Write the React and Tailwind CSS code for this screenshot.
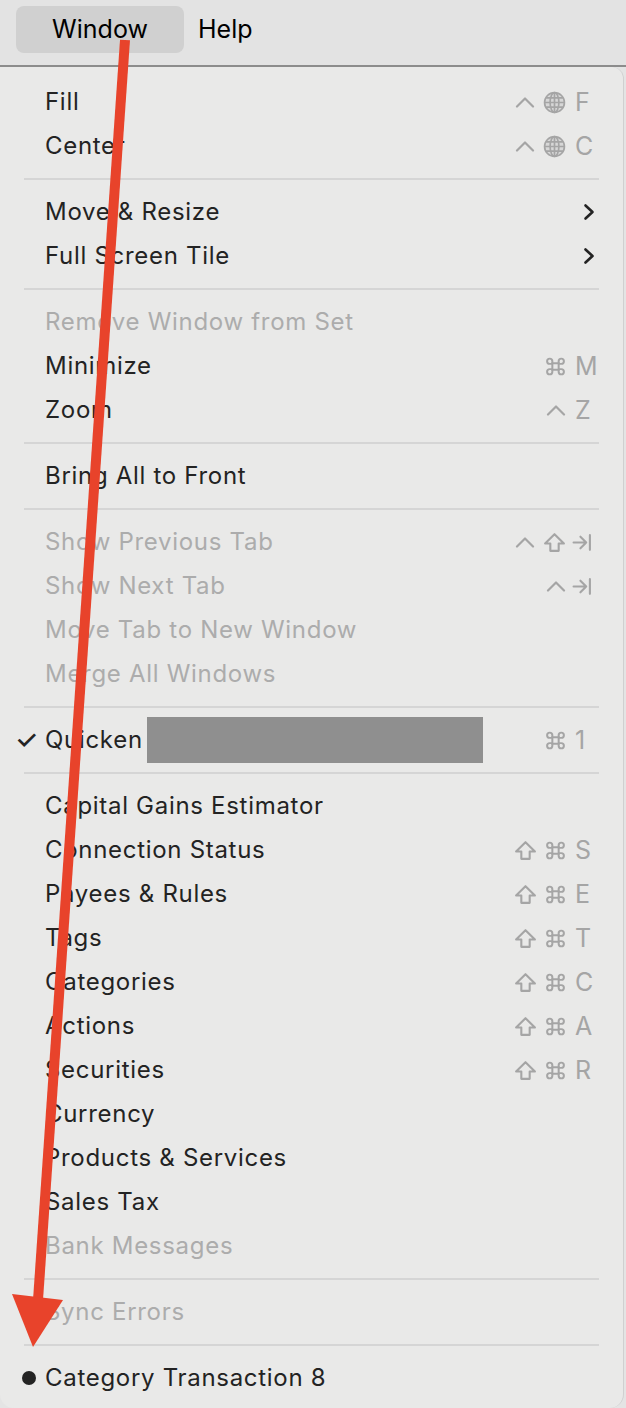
import React from "react";

const GRAY = "#a5a5a5";

function Ctrl() {
  return (
    <svg width="20" height="12" viewBox="0 0 20 12" fill="none" stroke={GRAY} strokeWidth="2.2" strokeLinecap="round" strokeLinejoin="round">
      <path d="M2 10.5 L10 2.5 L18 10.5" />
    </svg>
  );
}

function Globe() {
  return (
    <svg width="23" height="23" viewBox="0 0 22 22" fill="none" stroke={GRAY} strokeWidth="1.6">
      <circle cx="11" cy="11" r="9.5" fill={GRAY} fillOpacity="0.25" />
      <ellipse cx="11" cy="11" rx="4.2" ry="9.5" />
      <path d="M11 1.5 V20.5 M1.5 11 H20.5 M3 6.5 H19 M3 15.5 H19" />
    </svg>
  );
}

function Cmd() {
  return (
    <svg width="21" height="21" viewBox="0 0 20 20" fill="none" stroke={GRAY} strokeWidth="1.9">
      <path d="M7 7 H13 V13 H7 Z" />
      <path d="M7 7 V5 A2.5 2.5 0 1 0 4.5 7.5 H7" />
      <path d="M13 7 V5 A2.5 2.5 0 1 1 15.5 7.5 H13" />
      <path d="M7 13 V15 A2.5 2.5 0 1 1 4.5 12.5 H7" />
      <path d="M13 13 V15 A2.5 2.5 0 1 0 15.5 12.5 H13" />
    </svg>
  );
}

function Shift() {
  return (
    <svg width="23" height="21" viewBox="0 0 22 20" fill="none" stroke={GRAY} strokeWidth="2" strokeLinejoin="round">
      <path d="M11 2 L20 11 H15 V18 H7 V11 H2 Z" />
    </svg>
  );
}

function Tab() {
  return (
    <svg width="20" height="19" viewBox="0 0 19 18" fill="none" stroke={GRAY} strokeWidth="2" strokeLinecap="round" strokeLinejoin="round">
      <path d="M1.5 9 H13.5 M8 3.5 L13.5 9 L8 14.5 M17 2 V16" />
    </svg>
  );
}

function Chevron() {
  return (
    <svg width="12" height="18" viewBox="0 0 12 18" fill="none" stroke="#232323" strokeWidth="2.6" strokeLinecap="round" strokeLinejoin="round">
      <path d="M2.5 2.5 L9.5 9 L2.5 15.5" />
    </svg>
  );
}

const MOD = { ctrl: Ctrl, globe: Globe, cmd: Cmd, shift: Shift, tab: Tab };

const menu = [
  { label: "Fill", mods: ["ctrl", "globe"], key: "F" },
  { label: "Center", mods: ["ctrl", "globe"], key: "C" },
  "sep",
  { label: "Move & Resize", sub: true },
  { label: "Full Screen Tile", sub: true },
  "sep",
  { label: "Remove Window from Set", disabled: true },
  { label: "Minimize", mods: ["cmd"], key: "M" },
  { label: "Zoom", mods: ["ctrl"], key: "Z" },
  "sep",
  { label: "Bring All to Front" },
  "sep",
  { label: "Show Previous Tab", disabled: true, mods: ["ctrl", "shift"], key: "tab" },
  { label: "Show Next Tab", disabled: true, mods: ["ctrl"], key: "tab" },
  { label: "Move Tab to New Window", disabled: true },
  { label: "Merge All Windows", disabled: true },
  "sep",
  { label: "Quicken", check: true, redacted: true, mods: ["cmd"], key: "1" },
  "sep",
  { label: "Capital Gains Estimator" },
  { label: "Connection Status", mods: ["shift", "cmd"], key: "S" },
  { label: "Payees & Rules", mods: ["shift", "cmd"], key: "E" },
  { label: "Tags", mods: ["shift", "cmd"], key: "T" },
  { label: "Categories", mods: ["shift", "cmd"], key: "C" },
  { label: "Actions", mods: ["shift", "cmd"], key: "A" },
  { label: "Securities", mods: ["shift", "cmd"], key: "R" },
  { label: "Currency" },
  { label: "Products & Services" },
  { label: "Sales Tax" },
  { label: "Bank Messages", disabled: true },
  "sep",
  { label: "Sync Errors", disabled: true },
  "sep",
  { label: "Category Transaction 8", bullet: true },
];

function Row({ item }) {
  return (
    <div className="h-[44px] flex items-center pr-[28px]">
      {/* state column */}
      <div className="w-[45px] h-full flex items-center pl-[15px]">
        {item.check && <span className="text-[26px] font-medium leading-none text-[#232323]">✓</span>}
        {item.bullet && <span className="ml-[7px] w-[14px] h-[14px] rounded-full bg-[#232323]" />}
      </div>
      <span className={`text-[24px] tracking-[0.7px] leading-none whitespace-nowrap ${item.disabled ? "text-[#acacac]" : "text-[#232323]"}`}>
        {item.label}
      </span>
      {item.redacted && <div className="ml-[4px] w-[336px] h-[46px] bg-[#8f8f8f]" />}
      <div className="flex-1" />
      {item.sub && <Chevron />}
      {item.key && (
        <div className="flex items-center">
          <div className="flex items-center gap-[8px]">
            {item.mods.map((m, i) => {
              const Icon = MOD[m];
              return <Icon key={i} />;
            })}
          </div>
          <div className="w-[20px] ml-[9px] flex items-center">
            {item.key === "tab" ? (
              <span className="-ml-[3px] flex">
                <Tab />
              </span>
            ) : (
              <span className="text-[25px] leading-none" style={{ color: GRAY }}>
                {item.key}
              </span>
            )}
          </div>
        </div>
      )}
    </div>
  );
}

export default function App() {
  return (
    <div
      className="relative w-[626px] h-[1408px] overflow-hidden bg-[#e4e4e4]"
      style={{ fontFamily: "Inter, 'Liberation Sans', sans-serif" }}
    >
      {/* menu bar */}
      <div className="h-[67px] border-b-2 border-[#8c8c8c] bg-[#e3e3e3] flex items-start pt-[6px] pl-[16px]">
        <div className="w-[168px] h-[47px] rounded-[8px] bg-[#d0d0d0] flex items-center justify-center">
          <span className="text-[25px] text-black leading-none">Window</span>
        </div>
        <div className="h-[47px] flex items-center ml-[14px]">
          <span className="text-[25px] text-black leading-none">Help</span>
        </div>
      </div>

      {/* dropdown */}
      <div className="mr-[2px] h-[1341px] bg-[#e9e9e8] rounded-tr-[12px] rounded-b-[14px] border-r border-[#d0d0d0] pt-[13px]">
        {menu.map((item, i) =>
          item === "sep" ? (
            <div key={i} className="h-[22px] flex items-center mx-[24px]">
              <div className="w-full h-[2px] bg-[#d5d5d5]" />
            </div>
          ) : (
            <Row key={i} item={item} />
          )
        )}
      </div>

      {/* annotation arrow */}
      <svg className="absolute inset-0 pointer-events-none" width="626" height="1408" viewBox="0 0 626 1408">
        <path d="M125 40 L38 1300" stroke="#e8432b" strokeWidth="10" />
        <path d="M12 1294 L63 1300 L33 1347 Z" fill="#e8432b" />
      </svg>
    </div>
  );
}
